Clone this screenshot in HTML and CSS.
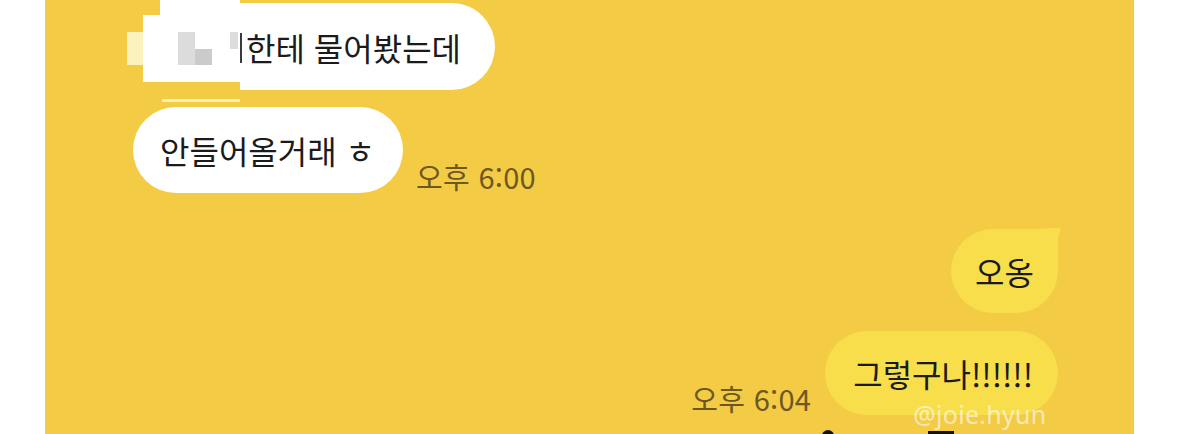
FILE: index.html
```html
<!DOCTYPE html>
<html lang="ko">
<head>
<meta charset="utf-8">
<link rel="stylesheet" href="styles.css">
</head>
<body>
<div class="screen">
  <div class="group left">
    <div class="row">
      <div class="bubble white first">
        <span class="mosaic m-top"></span>
        <span class="mosaic m-cut"></span>
        <span class="mosaic m-pale"></span>
        <span class="mosaic m-bottom"></span>
        <span class="mosaic m-grey1"></span>
        <span class="mosaic m-grey2"></span>
        <span class="mosaic m-grey3"></span>
        <span class="mosaic m-line"></span>
        <span class="bar"></span><span class="txt">한테 물어봤는데</span>
      </div>
    </div>
    <div class="row">
      <div class="bubble white second"><span class="txt">안들어올거래 ㅎ</span></div>
      <span class="time">오후 6:00</span>
    </div>
  </div>
  <div class="group right">
    <div class="row end">
      <div class="bubble mine tail">
        <span class="txt">오옹</span>
        <svg class="tail-svg" width="40" height="40" viewBox="0 0 40 40"><path d="M0 4 Q14 1 38 1 Q34 12 30 36 L0 36 Z" fill="#F8DE4B"/></svg>
      </div>
    </div>
    <div class="row end">
      <span class="time">오후 6:04</span>
      <div class="bubble mine wide"><span class="txt">그렇구나!!!!!!</span><span class="watermark">@joie.hyun</span></div>
    </div>
    <div class="row end cutoff">
      <span class="ink ink-a"></span><span class="ink ink-b"></span>
    </div>
  </div>
</div>
</body>
</html>
```
FILE: styles.css
```css
html, body {
  margin: 0;
  padding: 0;
  background: #ffffff;
}
body {
  width: 1179px;
  height: 434px;
  overflow: hidden;
  font-family: "Noto Sans CJK KR", "Noto Sans", sans-serif;
}
.screen {
  width: 1089px;
  height: 434px;
  margin-left: 45px;
  background: #F4CB45;
  overflow: hidden;
  display: flex;
  flex-direction: column;
  padding-top: 3px;
  box-sizing: border-box;
}
.group {
  display: flex;
  flex-direction: column;
  gap: 17px;
}
.left {
  padding-left: 88px;
}
.right {
  margin-top: 36px;
  padding-right: 76px;
  gap: 18px;
}
.row {
  display: flex;
  align-items: flex-end;
  gap: 13px;
}
.row.end {
  justify-content: flex-end;
  gap: 14px;
}
.bubble {
  position: relative;
  height: 86px;
  box-sizing: border-box;
  display: flex;
  align-items: center;
  border-radius: 43px;
  padding: 0 28px;
  font-size: 32px;
  color: #1b1b1b;
  letter-spacing: 0;
}
.txt {
  position: relative;
  line-height: 1;
}
.white {
  background: #ffffff;
}
.first {
  margin-left: 10px;
  height: 87px;
  border-radius: 0 44px 44px 0;
  padding-left: 97px;
  padding-right: 34px;
}
.second {
  padding-left: 27px;
  padding-right: 28px;
}
.bar {
  display: inline-block;
  width: 2px;
  height: 30px;
  background: #3a3a3a;
  margin-right: 4px;
  position: relative;
  top: 1px;
}
.mosaic {
  position: absolute;
  display: block;
}
.m-top { left: 17px; top: -3px; width: 80px; height: 15px; background: #ffffff; }
.m-cut { left: 0; top: 0; width: 17px; height: 12px; background: #F4CB45; }
.m-pale { left: -16px; top: 29px; width: 16px; height: 33px; background: #FCF2BE; }
.m-bottom { left: 0; top: 79px; width: 97px; height: 8px; background: #F4CB45; }
.m-grey1 { left: 35px; top: 29px; width: 17px; height: 33px; background: #DCDCDC; }
.m-grey2 { left: 52px; top: 46px; width: 17px; height: 16px; background: #CBCBCB; }
.m-grey3 { left: 87px; top: 29px; width: 8px; height: 17px; background: #DDDDDD; }
.m-line { left: 19px; top: 96px; width: 78px; height: 3px; background: #FBEEB4; }
.mine {
  background: #F8DE4B;
}
.tail {
  height: 84px;
  border-radius: 42px 6px 42px 42px;
  padding-left: 24px;
  padding-right: 24px;
}
.tail-svg {
  position: absolute;
  right: -5px;
  top: -2px;
}
.wide {
  height: 84px;
  padding-left: 28px;
  padding-right: 25px;
}
.time {
  font-size: 29px;
  color: #6E5822;
  line-height: 1;
  margin-bottom: 2px;
  white-space: nowrap;
  letter-spacing: 0.3px;
}
.watermark {
  position: absolute;
  left: 88px;
  top: 71px;
  font-family: "Noto Sans", sans-serif;
  font-size: 25px;
  line-height: 1;
  color: rgba(255, 255, 255, 0.6);
  white-space: nowrap;
  letter-spacing: 0.3px;
}
.cutoff {
  margin-top: -6px;
  height: 10px;
  align-items: flex-start;
  gap: 0;
}
.ink {
  display: block;
  background: #111;
}
.ink-a {
  width: 12px;
  height: 8px;
  margin-top: 3px;
  border-radius: 6px 6px 0 0;
  margin-right: 80px;
}
.ink-b {
  width: 26px;
  height: 6px;
  margin-top: 4px;
  margin-right: 104px;
}
```
